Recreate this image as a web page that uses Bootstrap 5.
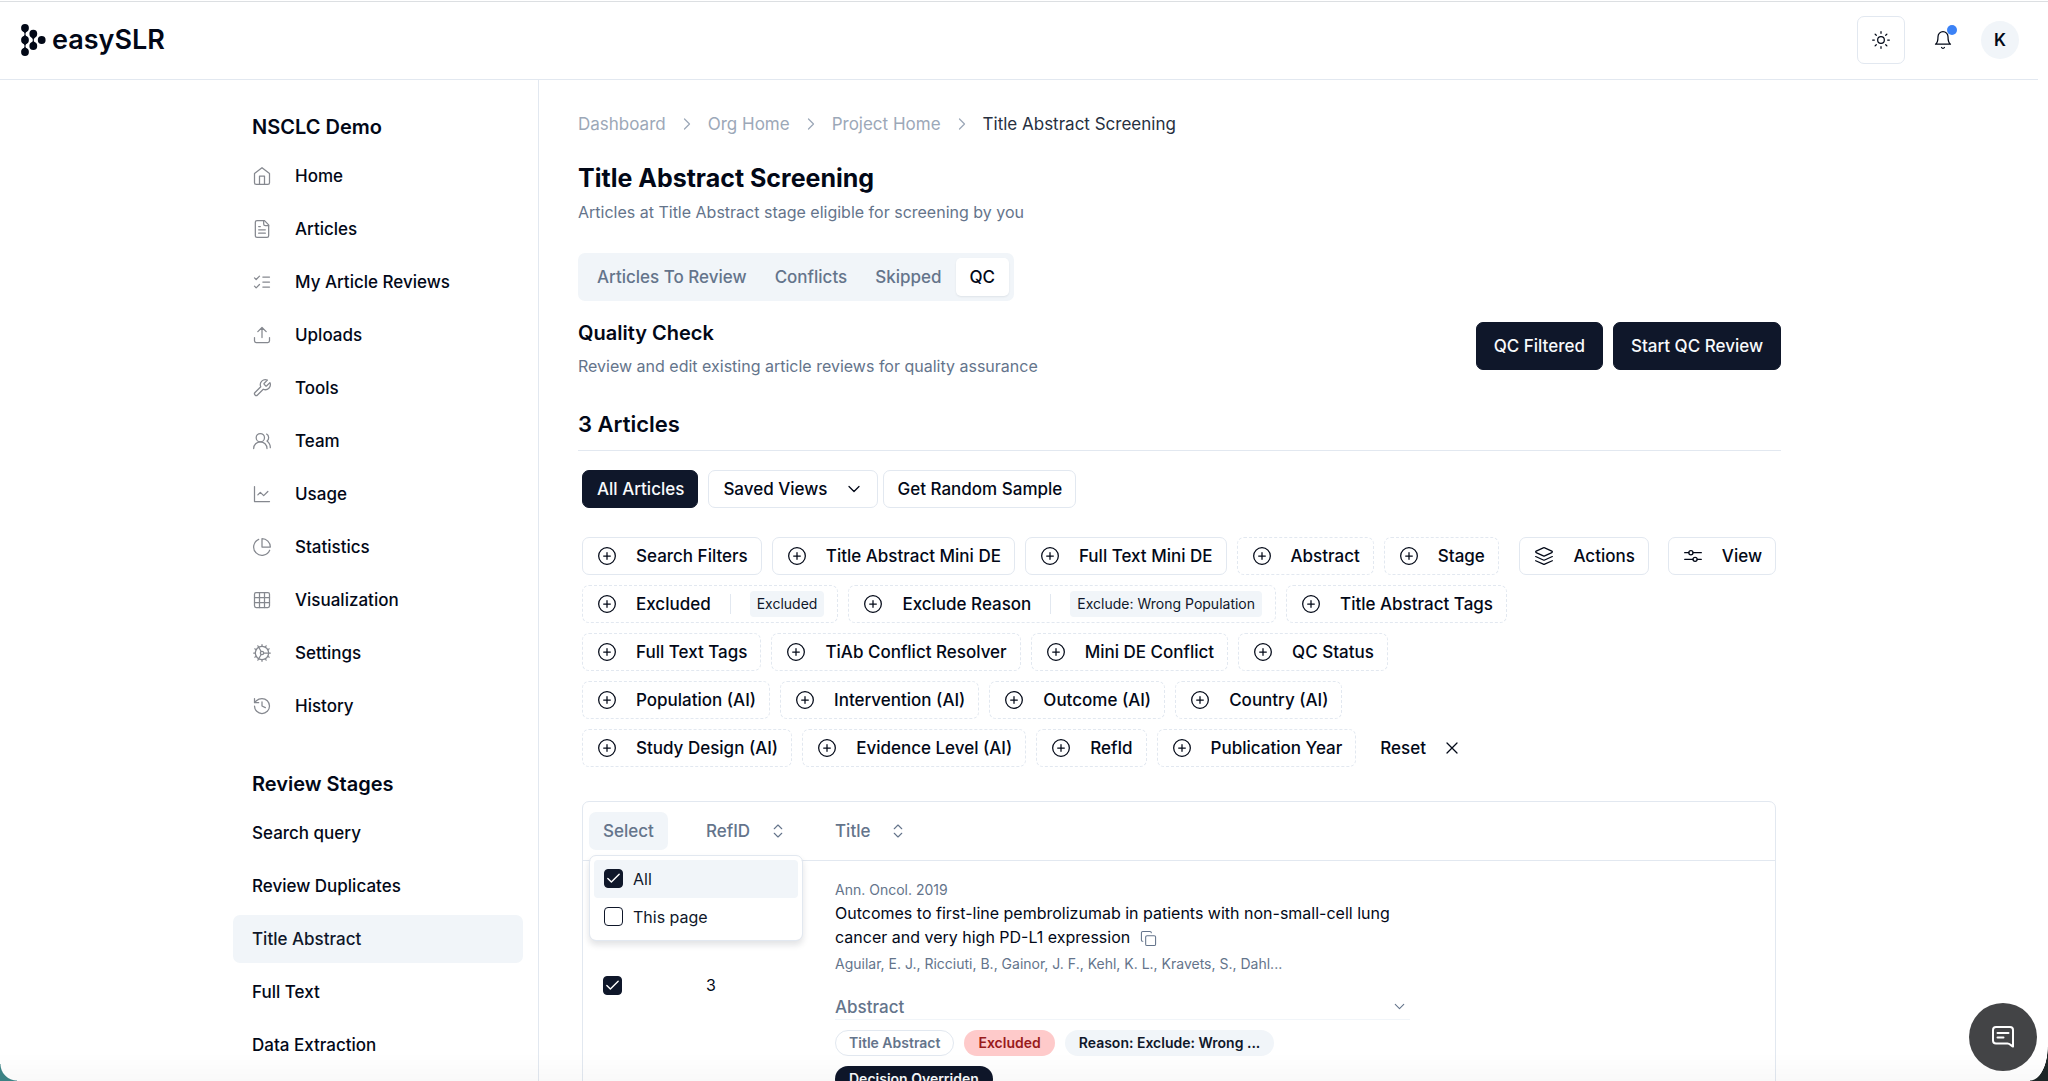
<!DOCTYPE html>
<html lang="en">
<head>
<meta charset="utf-8">
<meta name="viewport" content="width=device-width, initial-scale=1">
<title>Title Abstract Screening - easySLR</title>
<link href="https://cdn.jsdelivr.net/npm/bootstrap@5.3.0/dist/css/bootstrap.min.css" rel="stylesheet">
<style>
:root{--ink:#020817;--navy:#0f172a;--muted:#64748b;--line:#e2e8f0;--soft:#f1f5f9}
body{font-family:Inter,"Noto Sans",sans-serif;font-size:16px;line-height:24px;color:var(--ink);background:#fff}
svg.ic{width:20px;height:20px;fill:none;stroke:currentColor;stroke-width:1.5;stroke-linecap:round;stroke-linejoin:round;flex:none}
.app-shell{border-top:1px solid #fff;padding-right:10px;position:relative;background:#fff}
.app-shell::before{content:"";position:absolute;left:0;right:0;top:0;height:1px;background:#dcdfe2}
.topbar{height:79px;border-bottom:1px solid var(--line);padding:0 19px 0 20px}
.brand-link{color:var(--ink);font-size:27px;line-height:32px;font-weight:600;gap:6px}
.brand-link svg{width:26px;height:34px}
.sq-btn{width:48px;height:48px;padding:0;border:1px solid var(--line);border-radius:7px;background:#fff;color:var(--ink)}
.bell-btn{width:38px;height:38px;padding:0;border:0;color:var(--ink);margin:0 19px}
.bell-dot{position:absolute;top:4px;right:5px;width:10px;height:10px;border-radius:50%;background:#3b82f6}
.avatar-btn{width:38px;height:38px;padding:0;border:0;border-radius:50%;background:var(--soft);font-size:17px;font-weight:600;color:var(--ink)}
.page-frame{width:100%;max-width:1572px;margin:0 auto}
.side-col{width:306px;flex:none;padding:31px 15px 0 0;border-right:1px solid var(--line);overflow:auto;scrollbar-width:none}
.side-title{font-size:20px;line-height:32px;font-weight:600;padding:0 19px;margin:0}
.stage-title{margin-top:38px}
.side-nav{gap:5px;margin-top:9px}
.side-nav .nav-link{display:flex;align-items:center;height:48px;padding:0 19px;border-radius:7px;color:var(--ink);font-size:17px;font-weight:500;gap:23px}
.side-nav .nav-link.active{background:var(--soft);color:var(--navy)}
.side-nav svg.ic{color:#85888f}
.main-col{min-width:0;padding:30px 24px 0 39px;overflow:hidden}
.crumbs{gap:11px;color:#9ca8b8;margin:0;font-size:17px;line-height:28px}
.crumbs a{color:#9ca8b8;text-decoration:none}
.crumbs .here{color:#27303f}
.page-title{font-size:25px;line-height:40px;font-weight:700;margin:20px 0 2px}
.txt-muted{color:var(--muted)}
.tab-strip{background:var(--soft);border-radius:7px;padding:5px;margin-top:29px;width:max-content}
.tab-strip .nav-link{height:38px;padding:0 14px;border:0;background:transparent;border-radius:5px;color:var(--muted);font-size:17px;font-weight:500;line-height:38px}
.tab-strip .nav-link.active{background:#fff;color:var(--ink);box-shadow:0 1px 2px rgba(15,23,42,.08)}
.sect-title{font-size:20px;line-height:32px;font-weight:600;margin:0 0 5px}
.sect-acts{gap:10px;padding-top:5px}
.btn{font-size:17px;line-height:24px;font-weight:500;border-radius:7px}
.btn-navy{--bs-btn-color:#f8fafc;--bs-btn-bg:#0f172a;--bs-btn-border-color:#0f172a;--bs-btn-hover-color:#f8fafc;--bs-btn-hover-bg:#1e293b;--bs-btn-hover-border-color:#1e293b}
.btn-tall{height:48px;padding:0 17px}
.btn-slim{height:38px;padding:0 13px 0 14px}
.btn-plain{--bs-btn-color:#020817;--bs-btn-bg:#fff;--bs-btn-border-color:#e2e8f0;--bs-btn-hover-color:#020817;--bs-btn-hover-bg:#f1f5f9;--bs-btn-hover-border-color:#e2e8f0;display:inline-flex;align-items:center;white-space:nowrap}
.btn-plain svg.ic{margin-right:19px}
.btn-dash{border-style:dashed}
.count-title{font-size:22px;line-height:34px;font-weight:600;margin:29px 0 0;padding-bottom:9px;border-bottom:1px solid var(--line)}
.list-area{padding:0 5px 0 4px}
.view-row{margin-top:19px;gap:5px}
.view-row .btn-navy{margin-right:5px}
.filter-row{margin-top:29px}
.filter-set{gap:10px}
.act-set{gap:19px}
.vr-line{width:1px;height:20px;background:var(--line);margin:0 19px}
.tag-chip{background:var(--soft);border-radius:4px;font-size:14px;font-weight:400;line-height:26px;padding:0 7px;color:var(--navy)}
.grid-box{border:1px solid var(--line);border-radius:7px;margin-top:34px}
.art-table{table-layout:fixed;width:100%;margin:0;border-collapse:collapse}
.col-pick{width:103px}
.col-ref{width:129px}
.art-table th{height:58px;padding:0 0 0 20px;font-weight:500;color:var(--muted);border-bottom:1px solid var(--line);text-align:left}
.art-table .pick-head{padding-left:6px}
.art-table td{padding:0 0 0 20px;vertical-align:middle}
.select-btn{background:var(--soft);color:var(--muted);border:0;height:38px;padding:0 14px}
.sort-btn{border:0;background:none;padding:0;color:var(--muted);font-size:17px;font-weight:500;gap:19px}
.sort-btn svg.ic{width:18px;height:18px}
.pick-menu{display:block;position:absolute;top:43px;left:0;width:214px;padding:4px;border:1px solid var(--line);border-radius:7px;box-shadow:0 4px 6px rgba(15,23,42,.12);font-size:16px;font-weight:400;color:var(--navy)}
.pick-row{height:38px;padding:0 10px;gap:10px;border-radius:4px}
.pick-row.on{background:var(--soft)}
.form-check-input{display:block;width:19px;height:19px;margin:0;border:1px solid var(--navy);border-radius:5px;background-size:17px}
.form-check-input:checked{background-color:var(--navy);border-color:var(--navy);background-image:url("data:image/svg+xml,%3csvg xmlns='http://www.w3.org/2000/svg' viewBox='0 0 24 24' fill='none' stroke='%23fff' stroke-width='2' stroke-linecap='round' stroke-linejoin='round'%3e%3cpath d='M20 6 9 17l-5-5'/%3e%3c/svg%3e")}
.art-cell{max-width:575px;padding:18px 0}
.meta-line{font-size:14px;line-height:22px;color:var(--muted)}
.copy-btn{border:0;background:none;padding:0;margin-left:5px;color:var(--muted);vertical-align:-4px}
.copy-btn svg.ic{display:block;width:17px;height:17px}
.abs-toggle{border:0;border-bottom:1px solid #f1f5f9;background:none;padding:0 2px 0 0;height:25px;margin:20px 0 10px;color:var(--muted);font-size:17px;font-weight:500}
.abs-toggle svg.ic{width:17px;height:17px}
.pill{font-size:14px;font-weight:600;line-height:24px;border:1px solid transparent;border-radius:13px;padding:0 13px;white-space:nowrap}
.pill-line{border-color:var(--line);color:var(--muted)}
.pill-red{background:#fecaca;color:#991b1b}
.pill-soft{background:var(--soft);color:var(--navy)}
.pill-navy{background:var(--navy);color:#f8fafc}
.chat-btn{position:fixed;right:11px;bottom:10px;width:68px;height:68px;border:0;border-radius:50%;background:#434446;color:#fff;padding:0;z-index:5}
.chat-btn svg{width:24px;height:24px}
.bottom-shade{position:fixed;left:0;right:0;bottom:0;height:28px;background:linear-gradient(rgba(0,0,0,0),rgba(0,0,0,.025));pointer-events:none}
.corner{position:fixed;bottom:0;pointer-events:none}
.corner-l{left:0;width:17px;height:17px;background:radial-gradient(circle at 100% 0,transparent 16px,#3b8284 17px)}
.corner-r{right:0;width:18px;height:34px;background:radial-gradient(ellipse 18px 34px at 0 0,transparent 97%,#1c2526 100%)}
</style>
</head>
<body>
<svg width="0" height="0" class="position-absolute" aria-hidden="true">
<symbol id="plus" viewBox="0 0 24 24"><circle cx="12" cy="12" r="10"/><path d="M8 12h8M12 8v8"/></symbol>
<symbol id="down" viewBox="0 0 24 24"><path d="m6 9 6 6 6-6"/></symbol>
<symbol id="right" viewBox="0 0 24 24"><path d="m9 18 6-6-6-6"/></symbol>
<symbol id="updown" viewBox="0 0 24 24"><path d="m7 15 5 5 5-5M7 9l5-5 5 5"/></symbol>
</svg>
<div class="app-shell vh-100 d-flex flex-column overflow-hidden">
<header class="topbar d-flex align-items-center justify-content-between flex-shrink-0">
  <a href="#" class="brand-link d-flex align-items-center text-decoration-none">
    <svg viewBox="0 0 26 34" fill="currentColor" aria-hidden="true"><circle cx="5" cy="5" r="3.9"/><circle cx="5" cy="17" r="3.9"/><circle cx="5" cy="29" r="3.9"/><circle cx="13.3" cy="10.7" r="3.9"/><circle cx="13.3" cy="23" r="3.9"/><circle cx="21.7" cy="17" r="3.9"/><path d="M2.5 7.5Q4.600 9.500 4.600 11T2.500 14.500h5Q5.400 12.500 5.400 11T7.500 7.500zM2.500 19.500Q4.600 21.500 4.600 23T2.500 26.500h5Q5.400 24.500 5.400 23T7.500 19.500zM10.800 13.500Q12.900 15.500 12.900 17T10.800 20.500h5Q13.700 18.500 13.700 17T15.800 13.500z"/></svg>
    <span>easySLR</span>
  </a>
  <div class="d-flex align-items-center">
    <button class="sq-btn d-flex align-items-center justify-content-center" aria-label="Toggle theme"><svg class="ic" viewBox="0 0 24 24"><circle cx="12" cy="12" r="4"/><path d="M12 2v2M12 20v2M4.930 4.930l1.410 1.410M17.660 17.660l1.410 1.410M2 12h2M20 12h2M6.340 17.660l-1.410 1.410M19.070 4.930l-1.410 1.410"/></svg></button>
    <button class="bell-btn btn position-relative d-flex align-items-center justify-content-center" aria-label="Notifications"><svg class="ic" viewBox="0 0 24 24"><path d="M6 8a6 6 0 0 1 12 0c0 7 3 9 3 9H3s3-2 3-9M10.300 21a1.940 1.940 0 0 0 3.400 0"/></svg><span class="bell-dot"></span></button>
    <button class="avatar-btn" aria-label="Account">K</button>
  </div>
</header>
<div class="page-frame d-flex flex-grow-1 overflow-hidden">
  <aside class="side-col">
    <h2 class="side-title">NSCLC Demo</h2>
    <nav class="side-nav nav flex-column flex-nowrap">
      <a class="nav-link" href="#"><svg class="ic" viewBox="0 0 24 24"><path d="m3 9 9-7 9 7v11a2 2 0 0 1-2 2H5a2 2 0 0 1-2-2z"/><path d="M9 22V12h6v10"/></svg>Home</a>
      <a class="nav-link" href="#"><svg class="ic" viewBox="0 0 24 24"><path d="M15 2H6a2 2 0 0 0-2 2v16a2 2 0 0 0 2 2h12a2 2 0 0 0 2-2V7Z"/><path d="M14 2v4a2 2 0 0 0 2 2h4M10 9H8M16 13H8M16 17H8"/></svg>Articles</a>
      <a class="nav-link" href="#"><svg class="ic" viewBox="0 0 24 24"><path d="m3 17 2 2 4-4M3 7l2 2 4-4M13 6h8M13 12h8M13 18h8"/></svg>My Article Reviews</a>
      <a class="nav-link" href="#"><svg class="ic" viewBox="0 0 24 24"><path d="M21 15v4a2 2 0 0 1-2 2H5a2 2 0 0 1-2-2v-4M17 8l-5-5-5 5M12 3v12"/></svg>Uploads</a>
      <a class="nav-link" href="#"><svg class="ic" viewBox="0 0 24 24"><path d="M14.700 6.300a1 1 0 0 0 0 1.400l1.600 1.600a1 1 0 0 0 1.400 0l3.770-3.770a6 6 0 0 1-7.940 7.940l-6.910 6.910a2.120 2.120 0 0 1-3-3l6.910-6.910a6 6 0 0 1 7.940-7.940l-3.760 3.760z"/></svg>Tools</a>
      <a class="nav-link" href="#"><svg class="ic" viewBox="0 0 24 24"><path d="M18 21a8 8 0 0 0-16 0"/><circle cx="10" cy="8" r="5"/><path d="M22 20c0-3.370-2-6.500-4-8a5 5 0 0 0-.450-8.300"/></svg>Team</a>
      <a class="nav-link" href="#"><svg class="ic" viewBox="0 0 24 24"><path d="M3 3v18h18M19 9l-5 5-4-4-3 3"/></svg>Usage</a>
      <a class="nav-link" href="#"><svg class="ic" viewBox="0 0 24 24"><path d="M21.210 15.890A10 10 0 1 1 8 2.830M22 12A10 10 0 0 0 12 2v10z"/></svg>Statistics</a>
      <a class="nav-link" href="#"><svg class="ic" viewBox="0 0 24 24"><rect x="3" y="3" width="18" height="18" rx="2"/><path d="M3 9h18M3 15h18M9 3v18M15 3v18"/></svg>Visualization</a>
      <a class="nav-link" href="#"><svg class="ic" viewBox="0 0 24 24"><circle cx="12" cy="12" r="8"/><circle cx="12" cy="12" r="2"/><path d="M12 2v2M12 22v-2M17 20.660l-1-1.730M11 10.270 7 3.340M20.660 17l-1.730-1M3.340 7l1.730 1M14 12h8M2 12h2M20.660 7l-1.730 1M3.340 17l1.730-1M17 3.340l-1 1.730M11 13.730l-4 6.930"/></svg>Settings</a>
      <a class="nav-link" href="#"><svg class="ic" viewBox="0 0 24 24"><path d="M3 12a9 9 0 1 0 9-9 9.750 9.750 0 0 0-6.740 2.740L3 8M3 3v5h5M12 7v5l4 2"/></svg>History</a>
    </nav>
    <h2 class="side-title stage-title">Review Stages</h2>
    <nav class="side-nav nav flex-column flex-nowrap">
      <a class="nav-link" href="#">Search query</a>
      <a class="nav-link" href="#">Review Duplicates</a>
      <a class="nav-link active" href="#" aria-current="page">Title Abstract</a>
      <a class="nav-link" href="#">Full Text</a>
      <a class="nav-link" href="#">Data Extraction</a>
    </nav>
  </aside>
  <main class="main-col flex-grow-1">
    <nav aria-label="Breadcrumb"><ol class="crumbs list-unstyled d-flex align-items-center">
      <li><a href="#">Dashboard</a></li><li class="d-flex"><svg class="ic"><use href="#right"/></svg></li>
      <li><a href="#">Org Home</a></li><li class="d-flex"><svg class="ic"><use href="#right"/></svg></li>
      <li><a href="#">Project Home</a></li><li class="d-flex"><svg class="ic"><use href="#right"/></svg></li>
      <li class="here" aria-current="page">Title Abstract Screening</li>
    </ol></nav>
    <h1 class="page-title">Title Abstract Screening</h1>
    <p class="txt-muted m-0">Articles at Title Abstract stage eligible for screening by you</p>
    <div class="tab-strip nav" role="tablist">
      <button class="nav-link" role="tab">Articles To Review</button>
      <button class="nav-link" role="tab">Conflicts</button>
      <button class="nav-link" role="tab">Skipped</button>
      <button class="nav-link active" role="tab" aria-selected="true">QC</button>
    </div>
    <div class="d-flex justify-content-between mt-3">
      <div>
        <h2 class="sect-title">Quality Check</h2>
        <p class="txt-muted m-0">Review and edit existing article reviews for quality assurance</p>
      </div>
      <div class="sect-acts d-flex">
        <button class="btn btn-navy btn-tall">QC Filtered</button>
        <button class="btn btn-navy btn-tall">Start QC Review</button>
      </div>
    </div>
    <h2 class="count-title">3 Articles</h2>
    <div class="list-area">
      <div class="view-row d-flex">
        <button class="btn btn-navy btn-slim">All Articles</button>
        <button class="btn btn-plain btn-slim">Saved Views<svg class="ic ms-3 me-0"><use href="#down"/></svg></button>
        <button class="btn btn-plain btn-slim">Get Random Sample</button>
      </div>
      <div class="filter-row d-flex justify-content-between align-items-start">
        <div class="filter-set d-flex flex-wrap">
          <button class="btn btn-plain btn-slim"><svg class="ic"><use href="#plus"/></svg>Search Filters</button>
          <button class="btn btn-plain btn-slim"><svg class="ic"><use href="#plus"/></svg>Title Abstract Mini DE</button>
          <button class="btn btn-plain btn-slim"><svg class="ic"><use href="#plus"/></svg>Full Text Mini DE</button>
          <button class="btn btn-plain btn-dash btn-slim"><svg class="ic"><use href="#plus"/></svg>Abstract</button>
          <button class="btn btn-plain btn-dash btn-slim"><svg class="ic"><use href="#plus"/></svg>Stage</button>
          <button class="btn btn-plain btn-dash btn-slim"><svg class="ic"><use href="#plus"/></svg>Excluded<span class="vr-line"></span><span class="tag-chip">Excluded</span></button>
          <button class="btn btn-plain btn-dash btn-slim"><svg class="ic"><use href="#plus"/></svg>Exclude Reason<span class="vr-line"></span><span class="tag-chip">Exclude: Wrong Population</span></button>
          <button class="btn btn-plain btn-dash btn-slim"><svg class="ic"><use href="#plus"/></svg>Title Abstract Tags</button>
          <button class="btn btn-plain btn-dash btn-slim"><svg class="ic"><use href="#plus"/></svg>Full Text Tags</button>
          <button class="btn btn-plain btn-dash btn-slim"><svg class="ic"><use href="#plus"/></svg>TiAb Conflict Resolver</button>
          <button class="btn btn-plain btn-dash btn-slim"><svg class="ic"><use href="#plus"/></svg>Mini DE Conflict</button>
          <button class="btn btn-plain btn-dash btn-slim"><svg class="ic"><use href="#plus"/></svg>QC Status</button>
          <button class="btn btn-plain btn-dash btn-slim"><svg class="ic"><use href="#plus"/></svg>Population (AI)</button>
          <button class="btn btn-plain btn-dash btn-slim"><svg class="ic"><use href="#plus"/></svg>Intervention (AI)</button>
          <button class="btn btn-plain btn-dash btn-slim"><svg class="ic"><use href="#plus"/></svg>Outcome (AI)</button>
          <button class="btn btn-plain btn-dash btn-slim"><svg class="ic"><use href="#plus"/></svg>Country (AI)</button>
          <button class="btn btn-plain btn-dash btn-slim"><svg class="ic"><use href="#plus"/></svg>Study Design (AI)</button>
          <button class="btn btn-plain btn-dash btn-slim"><svg class="ic"><use href="#plus"/></svg>Evidence Level (AI)</button>
          <button class="btn btn-plain btn-dash btn-slim"><svg class="ic"><use href="#plus"/></svg>RefId</button>
          <button class="btn btn-plain btn-dash btn-slim"><svg class="ic"><use href="#plus"/></svg>Publication Year</button>
          <button class="btn btn-plain btn-slim border-0">Reset<svg class="ic ms-3 me-0" viewBox="0 0 24 24"><path d="M18 6 6 18M6 6l12 12"/></svg></button>
        </div>
        <div class="act-set d-flex flex-shrink-0">
          <button class="btn btn-plain btn-slim"><svg class="ic" viewBox="0 0 24 24"><path d="m12.830 2.180a2 2 0 0 0-1.660 0L2.600 6.080a1 1 0 0 0 0 1.830l8.580 3.910a2 2 0 0 0 1.660 0l8.580-3.900a1 1 0 0 0 0-1.830ZM22 12.650l-9.170 4.160a2 2 0 0 1-1.660 0L2 12.650M22 17.650l-9.170 4.160a2 2 0 0 1-1.660 0L2 17.650"/></svg>Actions</button>
          <button class="btn btn-plain btn-slim"><svg class="ic" viewBox="0 0 24 24"><path d="M2 8h5M12 8h10M2 16h10M17 16h5"/><circle cx="9.500" cy="8" r="2.500"/><circle cx="14.500" cy="16" r="2.500"/></svg>View</button>
        </div>
      </div>
      <div class="grid-box">
        <table class="art-table">
          <colgroup><col class="col-pick"><col class="col-ref"><col></colgroup>
          <thead><tr>
            <th class="pick-head" scope="col"><div class="position-relative">
              <button class="btn select-btn" aria-expanded="true">Select</button>
              <div class="dropdown-menu pick-menu">
                <label class="pick-row on d-flex align-items-center"><input class="form-check-input" type="checkbox" checked>All</label>
                <label class="pick-row d-flex align-items-center"><input class="form-check-input" type="checkbox">This page</label>
              </div></div></th>
            <th scope="col"><button class="sort-btn d-flex align-items-center">RefID<svg class="ic"><use href="#updown"/></svg></button></th>
            <th scope="col"><button class="sort-btn d-flex align-items-center">Title<svg class="ic"><use href="#updown"/></svg></button></th>
          </tr></thead>
          <tbody><tr>
            <td><input class="form-check-input" type="checkbox" checked aria-label="Select article 3"></td>
            <td>3</td>
            <td><div class="art-cell">
              <div class="meta-line">Ann. Oncol. 2019</div>
              <div>Outcomes to first-line pembrolizumab in patients with non-small-cell lung cancer and very high PD-L1 expression <button class="copy-btn" aria-label="Copy title"><svg class="ic" viewBox="0 0 24 24"><rect x="8" y="8" width="14" height="14" rx="2"/><path d="M4 16c-1.100 0-2-.900-2-2V4c0-1.100.900-2 2-2h10c1.100 0 2 .900 2 2"/></svg></button></div>
              <div class="meta-line mt-1">Aguilar, E. J., Ricciuti, B., Gainor, J. F., Kehl, K. L., Kravets, S., Dahl...</div>
              <button class="abs-toggle d-flex w-100 align-items-center justify-content-between">Abstract<svg class="ic"><use href="#down"/></svg></button>
              <div class="d-flex flex-wrap filter-set">
                <span class="pill pill-line">Title Abstract</span><span class="pill pill-red">Excluded</span><span class="pill pill-soft">Reason: Exclude: Wrong ...</span><span class="pill pill-navy">Decision Overriden</span>
              </div>
            </div></td>
          </tr></tbody>
        </table>
      </div>
    </div>
  </main>
</div>
</div>
<div class="bottom-shade"></div>
<div class="corner corner-l"></div>
<div class="corner corner-r"></div>
<button class="chat-btn d-flex align-items-center justify-content-center" aria-label="Open chat"><svg viewBox="0 0 24 24" fill="none" stroke="currentColor" stroke-width="2" stroke-linejoin="round" stroke-linecap="round"><path d="M22 21.500V5a3 3 0 0 0-3-3H5a3 3 0 0 0-3 3v10.500a3 3 0 0 0 3 3h11.500c2 0 3.500 2 5.500 3zM6.500 8h11M6.500 12.500h6"/></svg></button>
<script src="https://cdn.jsdelivr.net/npm/bootstrap@5.3.0/dist/js/bootstrap.bundle.min.js"></script>
</body>
</html>
